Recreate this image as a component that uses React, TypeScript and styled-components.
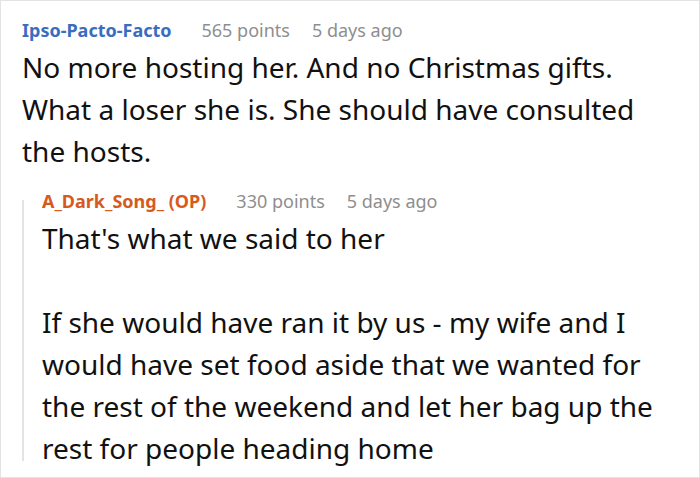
import styled, { createGlobalStyle } from "styled-components";

const GlobalStyle = createGlobalStyle`
  html, body {
    margin: 0;
    padding: 0;
    background: #ffffff;
  }
  body {
    font-family: "Noto Sans", "Open Sans", sans-serif;
  }
`;

const Frame = styled.div`
  box-sizing: border-box;
  width: 700px;
  height: 478px;
  border: 1px solid #e3e3e3;
  overflow: hidden;
  padding: 17px 38px 0 21px;
`;

const Comment = styled.div``;

const Meta = styled.div`
  display: flex;
  align-items: baseline;
  font-size: 18px;
  line-height: 24px;
`;

const Author = styled.span<{ $op?: boolean }>`
  font-weight: 700;
  color: ${({ $op }) => ($op ? "#d65a1e" : "#3b6dbf")};
  margin-right: 30px;
`;

const Info = styled.span`
  color: #8e8e8e;
  margin-right: 22px;
`;

const Body = styled.div`
  color: #111111;
  font-size: 28px;
  line-height: 42px;
  margin-top: 4px;

  p {
    margin: 0;
  }
  p + p {
    margin-top: 42px;
  }
`;

const Replies = styled.div`
  position: relative;
  margin-top: 17px;
  padding-left: 20px;

  &::before {
    content: "";
    position: absolute;
    left: 0;
    top: 11px;
    bottom: 8px;
    width: 2px;
    background: #e4e4e4;
  }
`;

type CommentData = {
  author: string;
  op?: boolean;
  points: string;
  age: string;
  paragraphs: string[];
};

const parent: CommentData = {
  author: "Ipso-Pacto-Facto",
  points: "565 points",
  age: "5 days ago",
  paragraphs: [
    "No more hosting her. And no Christmas gifts. What a loser she is. She should have consulted the hosts.",
  ],
};

const reply: CommentData = {
  author: "A_Dark_Song_ (OP)",
  op: true,
  points: "330 points",
  age: "5 days ago",
  paragraphs: [
    "That's what we said to her",
    "If she would have ran it by us - my wife and I would have set food aside that we wanted for the rest of the weekend and let her bag up the rest for people heading home",
  ],
};

const CommentView = ({ data }: { data: CommentData }) => (
  <Comment>
    <Meta>
      <Author $op={data.op}>{data.author}</Author>
      <Info>{data.points}</Info>
      <Info>{data.age}</Info>
    </Meta>
    <Body>
      {data.paragraphs.map((p, i) => (
        <p key={i}>{p}</p>
      ))}
    </Body>
  </Comment>
);

export default function App() {
  return (
    <>
      <GlobalStyle />
      <Frame>
        <CommentView data={parent} />
        <Replies>
          <CommentView data={reply} />
        </Replies>
      </Frame>
    </>
  );
}
